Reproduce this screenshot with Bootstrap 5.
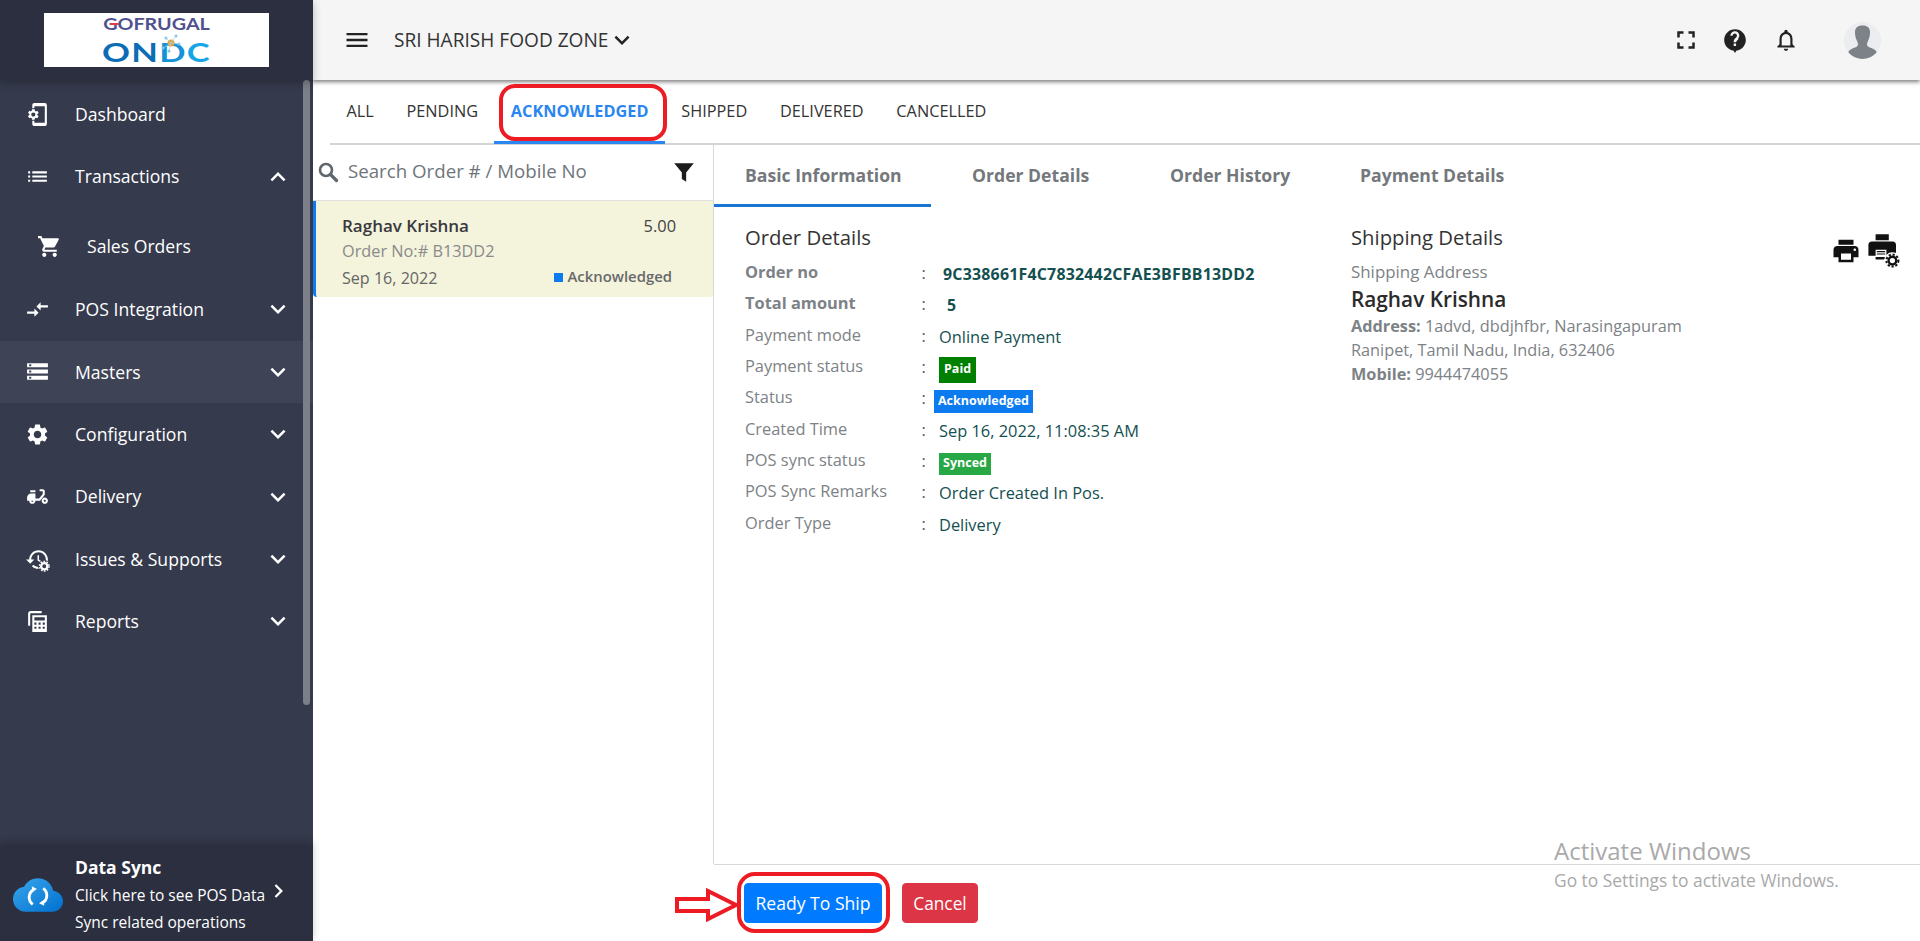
<!DOCTYPE html>
<html lang="en">
<head>
<meta charset="utf-8">
<title>Orders</title>
<link href="https://cdn.jsdelivr.net/npm/bootstrap@5.3.0/dist/css/bootstrap.min.css" rel="stylesheet">
<style>
html,body{height:100%;}
body{font-family:"Open Sans","Noto Sans",sans-serif;overflow:hidden;background:#fff;position:relative;}
.side{width:313px;background:#353a4c;color:#fff;position:relative;flex:none;}
.side-top{height:80px;background:#2b2f3f;box-shadow:0 3px 8px rgba(0,0,0,.25);padding:13px 0 0 44px;position:relative;z-index:2;}
.logo-box{width:225px;height:54px;background:#fff;text-align:center;position:relative;padding-top:1px;}
.logo-a{font-family:"Lato",sans-serif;font-size:17px;font-weight:700;color:#51508f;line-height:20.5px;height:20.5px;transform:scaleX(1.16);}
.logo-a b{font-weight:700;position:relative;}
.logo-a b::after{content:"";position:absolute;left:5px;top:10px;width:8px;height:2px;background:#d9434e;}
.logo-b{font-family:"Lato",sans-serif;font-size:27px;font-weight:700;color:#0b6db5;line-height:33px;height:33px;letter-spacing:1px;transform:scaleX(1.28);}
.logo-b i{font-style:normal;color:#1492d8;}
.logo-b u{text-decoration:none;color:#16a6e6;}
.logo-dots{position:absolute;left:116px;top:21px;}
.menu-wrap{padding-top:3px;flex:1;}
.mi{height:62.4px;padding:0 20.5px 0 25px;font-size:17.6px;}
.mi svg.ic{width:25px;height:25px;fill:#fff;flex:none;margin-right:25px;}
.mi svg.ch{width:30px;height:30px;fill:#fff;margin-left:auto;}
.mi.hot{background:#3e4355;}
.mi.sub{height:70.5px;padding-left:37px;padding-top:7px;}
.thumb{position:absolute;left:303px;top:80px;width:7px;height:625px;background:#7c7f87;border-radius:4px;z-index:1;}
.side-foot{height:96px;background:#2b2f3f;box-shadow:0 -3px 8px rgba(0,0,0,.2);padding:6px 0 0 13px;position:relative;z-index:2;}
.side-foot .cloud{width:50px;height:50px;margin-right:12px;flex:none;margin-top:-2px;}
.df-t{font-size:17.5px;font-weight:700;line-height:22px;margin-bottom:4px;}
.df-s{font-size:15.5px;line-height:27px;white-space:nowrap;}
.foot-ch{width:30px;height:30px;fill:#fff;margin-left:auto;margin-right:21px;margin-top:-10px;}
.topbar{height:80px;background:#f5f5f5;box-shadow:0 2px 4px rgba(0,0,0,.5);padding:0 39.500px 0 31px;position:relative;z-index:1;flex:none;}
.topbar .shop{font-size:19.100px;color:#333;margin-left:23px;}
.tb-ic{fill:#222;}
.os-tabs{height:65px;margin-left:17px;border-bottom:2px solid #d5d5d5;flex:none;}
.os-tab{font-size:16.3px;color:#333;padding:0 16.4px;height:64px;line-height:62px;white-space:nowrap;}
.os-tab.on{color:#2a86f0;font-weight:700;border-bottom:3px solid #2a86f0;}
.os-body{flex:1;min-height:0;}
.list-col{width:401px;border-right:1px solid #d8d8d8;flex:none;}
.searchrow{height:56px;border-bottom:1px solid #e0e0e0;padding:0 16px 2px 4px;}
.searchrow span{font-size:18.7px;color:#6f757b;margin-left:9px;}
.oitem{height:96px;background:#f4f3dc;border-left:3px solid #0d7bf0;border-radius:0 0 4px 4px;padding:14px 37px 0 26px;}
.o-name{font-size:17px;font-weight:600;color:#39393f;line-height:22px;}
.o-amt{font-size:16.4px;color:#444;line-height:21px;}
.o-no{font-size:16.3px;color:#8a8a8a;line-height:25px;margin-top:2px;}
.o-date{font-size:16.1px;color:#666;line-height:28px;}
.o-st{font-size:14.9px;font-weight:600;color:#68696b;line-height:24px;margin-right:4px;}
.o-st i{display:inline-block;width:9px;height:9px;background:#0d7bf0;margin-right:4px;}
.d-tabs{height:62px;flex:none;}
.d-tab{font-size:17.6px;font-weight:700;color:#74787c;padding:0 0 0 31px;height:62px;line-height:61px;white-space:nowrap;}
.d-tab.on{border-bottom:3px solid #1976d2;width:217px;}
.d-tab.t2{width:239px;padding-left:41px;}
.d-tab.t3{width:190px;padding-left:0;}
.d-tab.t4{padding-left:0;}
.d-body{padding:17px 0 0 31px;position:relative;flex:1;}
.hd{font-size:20.300px;color:#333;line-height:26px;margin-bottom:7px;}
.col-l{width:606px;flex:none;}
.dr{height:31.35px;font-size:16.4px;color:#7d8286;line-height:30px;white-space:nowrap;}
.dr .lb{width:176.5px;flex:none;}
.dr .cn{width:17.5px;flex:none;color:#555;padding-top:1px;}
.dr .vl{color:#14504f;padding-top:2px;font-size:16.4px;}
.dr.bd .lb{font-weight:700;}
.dr.bd .vl{font-weight:700;padding-left:4px;font-size:15.9px;letter-spacing:.22px;}
.tg{display:inline-block;color:#fff;font-weight:700;font-size:12.5px;line-height:1;padding:5px;vertical-align:top;margin-top:4px;}
.tg.p{background:#008000;padding:6px 5px 7px;}
.tg.a{background:#0d7bf0;margin-left:-5px;padding:5px 4px;margin-top:6px;}
.tg.s{background:#28a745;padding:4px 4px 5px;margin-top:6px;}
.sh1{font-size:16.9px;color:#7d8286;line-height:24px;padding-top:2.5px;}
.sh2{font-size:20.8px;font-weight:600;color:#2b2b2b;line-height:28px;padding-top:1px;}
.sh3{font-size:16.3px;color:#7d8286;line-height:24.4px;}
.sh2 + .sh3{padding-top:1px;}
.prn{position:absolute;left:1117px;top:29px;}
.actionbar{height:77px;flex:none;padding:19px 0 0 431px;}
.btn-ship{background:#007bff;border-color:#007bff;color:#fff;width:138px;height:40px;font-size:17.6px;padding:1px 0 0;border-radius:4px;}
.btn-can{background:#dc3545;border-color:#dc3545;color:#fff;width:76px;height:40px;font-size:17.3px;padding:1px 0 0;border-radius:4px;margin-left:20px;}
.bline{position:absolute;left:714px;right:0;top:864px;height:1px;background:#d8d8d8;}
.note{position:absolute;border:4px solid #ed1c24;border-radius:16px;background:transparent;z-index:5;}
.note.n1{left:499px;top:84px;width:168px;height:57px;}
.note.n2{left:737px;top:872px;width:153px;height:61px;border-radius:18px;}
.n-arrow{position:absolute;left:674px;top:888px;z-index:5;}
.wm{position:absolute;left:1554px;top:835px;color:#a9a9a9;z-index:6;pointer-events:none;white-space:nowrap;}
.wm div:first-child{font-size:24px;line-height:32px;}
.wm div:last-child{font-size:17.4px;line-height:26px;}
</style>
</head>
<body class="d-flex">
<aside class="side d-flex flex-column vh-100">
  <div class="side-top"><div class="logo-box"><div class="logo-a"><b>G</b>OFRUGAL</div><div class="logo-b">ON<i>D</i><u>C</u></div>
    <svg class="logo-dots" width="22" height="22" viewBox="0 0 22 22"><circle cx="11" cy="9" r="3.500" fill="#e2a33c"/><g fill="#7cc4ec"><circle cx="3" cy="14" r="1.500"/><circle cx="6" cy="4" r="1.500"/><circle cx="16" cy="2" r="1.500"/><circle cx="19" cy="10" r="1.500"/><circle cx="9" cy="17" r="1.500"/></g><path d="M3 14L11 9L6 4M11 9L16 2M11 9L19 10M11 9L9 17" stroke="#9fd3ef" stroke-width=".7" fill="none"/></svg>
  </div></div>
  <div class="thumb"></div>
  <nav class="menu-wrap">
    <div class="mi d-flex align-items-center"><svg class="ic" viewBox="0 0 24 24"><path d="M11.8 12.5v-1l1.1-.8c.1-.1.1-.2.1-.3l-1-1.7c-.1-.1-.2-.2-.3-.1l-1.3.4c-.3-.2-.6-.4-.9-.5l-.2-1.3c0-.1-.1-.2-.3-.2H7c-.1 0-.2.1-.3.2l-.2 1.3c-.3.1-.6.3-.9.5l-1.3-.5c-.1 0-.2 0-.3.1l-1 1.7c-.1.1 0 .2.1.3l1.1.8v1l-1.1.8c-.1.2-.1.3-.1.4l1 1.7c.1.1.2.2.3.1L5.6 15c.3.2.6.4.9.5l.2 1.3c.1.1.2.2.3.2h2c.1 0 .2-.1.3-.2l.2-1.3c.3-.1.6-.3.9-.5l1.3.5c.1 0 .2 0 .3-.1l1-1.7c.1-.1 0-.2-.1-.3l-1.1-.9zM8 14c-1.1 0-2-.9-2-2s.9-2 2-2 2 .9 2 2-.9 2-2 2zM19 1H9c-1.1 0-2 .9-2 2v3h2V4h10v16H9v-2H7v3c0 1.1.9 2 2 2h10c1.1 0 2-.9 2-2V3c0-1.1-.9-2-2-2z"/></svg>Dashboard</div>
    <div class="mi d-flex align-items-center"><svg class="ic" viewBox="0 0 24 24"><path d="M3 13h2v-2H3v2zm0 4h2v-2H3v2zm0-8h2V7H3v2zm4 4h14v-2H7v2zm0 4h14v-2H7v2zM7 7v2h14V7H7z"/></svg>Transactions<svg class="ch" viewBox="0 0 24 24"><path d="M12 8l-6 6 1.41 1.41L12 10.83l4.59 4.58L18 14z"/></svg></div>
    <div class="mi sub d-flex align-items-center"><svg class="ic" viewBox="0 0 24 24"><path d="M7 18c-1.1 0-1.99.9-1.99 2S5.9 22 7 22s2-.9 2-2-.9-2-2-2zM1 2v2h2l3.6 7.59-1.35 2.45c-.16.28-.25.61-.25.96 0 1.1.9 2 2 2h12v-2H7.42c-.14 0-.25-.11-.25-.25l.03-.12.9-1.63h7.45c.75 0 1.41-.41 1.75-1.03l3.58-6.49c.08-.14.12-.31.12-.48 0-.55-.45-1-1-1H5.21l-.94-2H1zm16 16c-1.1 0-1.99.9-1.99 2s.89 2 1.99 2 2-.9 2-2-.9-2-2-2z"/></svg>Sales Orders</div>
    <div class="mi d-flex align-items-center"><svg class="ic" viewBox="0 0 24 24"><path d="M9.01 14H2v2h7.01v3L13 15l-3.99-4v3zm5.98-1v-3H22V8h-7.01V5L11 9l3.99 4z"/></svg>POS Integration<svg class="ch" viewBox="0 0 24 24"><path d="M16.59 8.59L12 13.17 7.41 8.59 6 10l6 6 6-6z"/></svg></div>
    <div class="mi hot d-flex align-items-center"><svg class="ic" viewBox="0 0 24 24"><path d="M2 20h20v-4H2v4zm2-3h2v2H4v-2zM2 4v4h20V4H2zm4 3H4V5h2v2zm-4 7h20v-4H2v4zm2-3h2v2H4v-2z"/></svg>Masters<svg class="ch" viewBox="0 0 24 24"><path d="M16.59 8.59L12 13.17 7.41 8.59 6 10l6 6 6-6z"/></svg></div>
    <div class="mi d-flex align-items-center"><svg class="ic" viewBox="0 0 24 24"><path d="M19.14 12.94c.04-.3.06-.61.06-.94 0-.32-.02-.64-.07-.94l2.03-1.58c.18-.14.23-.41.12-.61l-1.92-3.32c-.12-.22-.37-.29-.59-.22l-2.39.96c-.5-.38-1.03-.7-1.62-.94l-.36-2.54c-.04-.24-.24-.41-.48-.41h-3.84c-.24 0-.43.17-.47.41l-.36 2.54c-.59.24-1.13.57-1.62.94l-2.39-.96c-.22-.08-.47 0-.59.22L2.74 8.87c-.12.21-.08.47.12.61l2.03 1.58c-.05.3-.09.63-.09.94s.02.64.07.94l-2.03 1.58c-.18.14-.23.41-.12.61l1.92 3.32c.12.22.37.29.59.22l2.39-.96c.5.38 1.03.7 1.62.94l.36 2.54c.05.24.24.41.48.41h3.84c.24 0 .44-.17.47-.41l.36-2.54c.59-.24 1.13-.56 1.62-.94l2.39.96c.22.08.47 0 .59-.22l1.92-3.32c.12-.22.07-.47-.12-.61l-2.01-1.58zM12 15.6c-1.98 0-3.6-1.62-3.6-3.6s1.62-3.6 3.6-3.6 3.6 1.62 3.6 3.6-1.62 3.6-3.6 3.6z"/></svg>Configuration<svg class="ch" viewBox="0 0 24 24"><path d="M16.59 8.59L12 13.17 7.41 8.59 6 10l6 6 6-6z"/></svg></div>
    <div class="mi d-flex align-items-center"><svg class="ic" viewBox="0 0 24 24"><path d="M19 7c0-1.1-.9-2-2-2h-3v2h3v2.65L13.52 14H10V9H6c-2.21 0-4 1.79-4 4v3h2c0 1.66 1.34 3 3 3s3-1.34 3-3h4.48L19 10.35V7zM7 17c-.55 0-1-.45-1-1h2c0 .55-.45 1-1 1zM5 6h5v2H5zM19 13c-1.66 0-3 1.34-3 3s1.34 3 3 3 3-1.34 3-3-1.34-3-3-3zm0 4c-.55 0-1-.45-1-1s.45-1 1-1 1 .45 1 1-.45 1-1 1z"/></svg>Delivery<svg class="ch" viewBox="0 0 24 24"><path d="M16.59 8.59L12 13.17 7.41 8.59 6 10l6 6 6-6z"/></svg></div>
    <div class="mi d-flex align-items-center"><svg class="ic" viewBox="0 0 24 24"><path d="M13 3c-4.97 0-9 4.03-9 9H1l3.89 3.89.07.14L9 12H6c0-3.87 3.13-7 7-7s7 3.13 7 7-3.13 7-7 7c-1.93 0-3.68-.79-4.94-2.06l-1.42 1.42C8.27 19.99 10.51 21 13 21c4.97 0 9-4.03 9-9s-4.03-9-9-9zm-1 5v5l4.28 2.54.72-1.21-3.5-2.08V8H12z"/><circle cx="18.5" cy="18.5" r="6" fill="#353a4c"/><circle cx="18.5" cy="18.5" r="3" fill="none" stroke="#fff" stroke-width="2.2"/><circle cx="18.5" cy="18.5" r="4.6" fill="none" stroke="#fff" stroke-width="1.4" stroke-dasharray="1.6 1.3"/></svg>Issues &amp; Supports<svg class="ch" viewBox="0 0 24 24"><path d="M16.59 8.59L12 13.17 7.41 8.59 6 10l6 6 6-6z"/></svg></div>
    <div class="mi d-flex align-items-center"><svg class="ic" viewBox="0 0 24 24"><path d="M3 4.5C3 3.1 4.1 2 5.5 2H16v2H5.500C5.200 4 5 4.200 5 4.500V16H3z"/><path fill-rule="evenodd" d="M7 6h14v16H7zM9 8v3h10V8zM9 13v2h2v-2zm4 0v2h2v-2zm4 0v2h2v-2zM9 17v2h2v-2zm4 0v2h2v-2zm4 0v2h2v-2z"/></svg>Reports<svg class="ch" viewBox="0 0 24 24"><path d="M16.59 8.59L12 13.17 7.41 8.59 6 10l6 6 6-6z"/></svg></div>
  </nav>
  <div class="side-foot d-flex align-items-center">
    <svg class="cloud" viewBox="0 0 24 24"><defs><linearGradient id="cg" x1="0" y1="0" x2="1" y2="1"><stop offset="0" stop-color="#3aa6ec"/><stop offset="1" stop-color="#0070cf"/></linearGradient></defs><path fill="url(#cg)" d="M19.35 10.04C18.67 6.59 15.64 4 12 4 9.11 4 6.6 5.64 5.35 8.04 2.34 8.36 0 10.91 0 14c0 3.31 2.69 6 6 6h13c2.76 0 5-2.24 5-5 0-2.64-2.05-4.78-4.65-4.96z"/><path fill="none" stroke="#fff" stroke-width="1.4" d="M9.500 16.500a4.200 4.200 0 0 1 .3-7M14.500 8.800a4.200 4.200 0 0 1-.3 7"/><path fill="#fff" d="M9 7.800l2.500 1.300-2.200 1.500zM15 17.200l-2.500-1.300 2.200-1.500z"/></svg>
    <div><div class="df-t">Data Sync</div><div class="df-s">Click here to see POS Data</div><div class="df-s">Sync related operations</div></div>
    <svg class="foot-ch" viewBox="0 0 24 24"><path d="M10 6L8.590 7.410 13.170 12l-4.580 4.590L10 18l6-6z"/></svg>
  </div>
</aside>
<main class="flex-grow-1 d-flex flex-column vh-100" style="min-width:0">
  <header class="topbar d-flex align-items-center">
    <svg class="tb-ic" width="28" height="28" viewBox="0 0 24 24" style="margin-left:-1px"><path d="M3 18h18v-2H3v2zm0-5h18v-2H3v2zm0-7v2h18V6H3z"/></svg>
    <span class="shop">SRI HARISH FOOD ZONE</span>
    <svg class="tb-ic" width="30" height="30" viewBox="0 0 24 24" style="margin-left:-1px"><path d="M16.59 8.59L12 13.17 7.41 8.59 6 10l6 6 6-6z"/></svg>
    <div class="ms-auto d-flex align-items-center">
      <svg class="tb-ic" width="30" height="30" viewBox="0 0 24 24"><path d="M7 14H5v5h5v-2H7v-3zm-2-4h2V7h3V5H5v5zm12 7h-3v2h5v-5h-2v3zM14 5v2h3v3h2V5h-5z"/></svg>
      <svg class="tb-ic" width="26" height="26" viewBox="0 0 24 24" style="margin-left:21px"><path fill-rule="evenodd" d="M12 2C6.480 2 2 6.480 2 12c0 5 3.600 9 8.500 9.800l1.500 2.200 1.200-2.100C18.200 21.300 22 17 22 12c0-5.520-4.480-10-10-10zm1 15.500h-2.200v-2.200H13zm2.070-6.250l-.9.920C13.450 12.900 13 13.500 13 14h-2.200v-.500c0-1.100.45-2.100 1.170-2.830l1.240-1.260c.37-.36.59-.86.59-1.410 0-1.100-.9-2-2-2s-2 .9-2 2H7.800c0-2.210 1.990-4 4.200-4s4 1.790 4 4c0 .88-.36 1.680-.93 2.250z"/></svg>
      <svg class="tb-ic" width="26" height="26" viewBox="0 0 24 24" style="margin-left:25px"><path d="M12 22c1.100 0 2-.9 2-2h-4c0 1.100.9 2 2 2zm6-6v-5c0-3.070-1.630-5.640-4.500-6.320V4c0-.83-.67-1.500-1.500-1.500s-1.500.67-1.500 1.500v.68C7.640 5.360 6 7.920 6 11v5l-2 2v1h16v-1l-2-2zm-2 1H8v-6c0-2.480 1.510-4.500 4-4.500s4 2.020 4 4.500v6z"/></svg>
      <svg width="37" height="37" viewBox="0 0 37 37" style="margin-left:45px"><defs><clipPath id="av"><circle cx="18.500" cy="18.500" r="18.500"/></clipPath></defs><circle cx="18.500" cy="18.500" r="18.500" fill="#ebedf0"/><g clip-path="url(#av)" fill="#7d8289"><path d="M11 10c0-5 3.500-6.500 7.500-6.500S26 5 26 10c0 3.500-.7 6-1.600 8-.7 1.600-1.400 3-1.400 4.500 0 2 3 3 6 4.300 2.500 1.100 4 2.500 4 5.200v6H4v-6c0-2.700 1.500-4.100 4-5.200 3-1.300 6-2.300 6-4.300 0-1.500-.7-2.900-1.400-4.500C11.700 16 11 13.500 11 10z"/></g></svg>
    </div>
  </header>
  <div class="os-tabs d-flex">
    <div class="os-tab">ALL</div><div class="os-tab">PENDING</div><div class="os-tab on">ACKNOWLEDGED</div><div class="os-tab">SHIPPED</div><div class="os-tab">DELIVERED</div><div class="os-tab">CANCELLED</div>
  </div>
  <div class="os-body d-flex">
    <div class="list-col">
      <div class="searchrow d-flex align-items-center">
        <svg width="22" height="22" viewBox="0 0 22 22"><circle cx="9" cy="9" r="6" fill="none" stroke="#5f666d" stroke-width="2.600"/><path d="M13.500 13.500l6 6" stroke="#5f666d" stroke-width="3.200" stroke-linecap="round"/></svg>
        <span>Search Order # / Mobile No</span>
        <svg class="ms-auto" width="26" height="26" viewBox="0 0 24 24" fill="#1c1c1c"><path d="M3 4h18l-7 8.500V21l-4-2.500v-6z"/></svg>
      </div>
      <div class="oitem">
        <div class="d-flex justify-content-between"><span class="o-name">Raghav Krishna</span><span class="o-amt">5.00</span></div>
        <div class="o-no">Order No:# B13DD2</div>
        <div class="d-flex justify-content-between"><span class="o-date">Sep 16, 2022</span><span class="o-st"><i></i>Acknowledged</span></div>
      </div>
    </div>
    <div class="flex-grow-1 d-flex flex-column">
      <div class="d-tabs d-flex">
        <div class="d-tab on">Basic Information</div><div class="d-tab t2">Order Details</div><div class="d-tab t3">Order History</div><div class="d-tab t4">Payment Details</div>
      </div>
      <div class="d-body d-flex">
        <div class="col-l">
          <div class="hd">Order Details</div>
          <div class="dr bd d-flex"><div class="lb">Order no</div><div class="cn">:</div><div class="vl">9C338661F4C7832442CFAE3BFBB13DD2</div></div>
          <div class="dr bd d-flex"><div class="lb">Total amount</div><div class="cn">:</div><div class="vl" style="padding-left:8px">5</div></div>
          <div class="dr d-flex"><div class="lb">Payment mode</div><div class="cn">:</div><div class="vl">Online Payment</div></div>
          <div class="dr d-flex"><div class="lb">Payment status</div><div class="cn">:</div><div class="vl"><span class="tg p">Paid</span></div></div>
          <div class="dr d-flex"><div class="lb">Status</div><div class="cn">:</div><div class="vl"><span class="tg a">Acknowledged</span></div></div>
          <div class="dr d-flex"><div class="lb">Created Time</div><div class="cn">:</div><div class="vl">Sep 16, 2022, 11:08:35 AM</div></div>
          <div class="dr d-flex"><div class="lb">POS sync status</div><div class="cn">:</div><div class="vl"><span class="tg s">Synced</span></div></div>
          <div class="dr d-flex"><div class="lb">POS Sync Remarks</div><div class="cn">:</div><div class="vl">Order Created In Pos.</div></div>
          <div class="dr d-flex"><div class="lb">Order Type</div><div class="cn">:</div><div class="vl">Delivery</div></div>
        </div>
        <div>
          <div class="hd">Shipping Details</div>
          <div class="sh1">Shipping Address</div>
          <div class="sh2">Raghav Krishna</div>
          <div class="sh3"><b>Address:</b> 1advd, dbdjhfbr, Narasingapuram</div>
          <div class="sh3">Ranipet, Tamil Nadu, India, 632406</div>
          <div class="sh3"><b>Mobile:</b> 9944474055</div>
        </div>
        <div class="prn d-flex">
          <svg width="30" height="30" viewBox="0 0 24 24" fill="#111"><path d="M19 8H5c-1.660 0-3 1.340-3 3v6h4v4h12v-4h4v-6c0-1.660-1.340-3-3-3zm-3 11H8v-5h8v5zm3-7c-.55 0-1-.45-1-1s.45-1 1-1 1 .45 1 1-.45 1-1 1zm-1-9H6v4h12V3z"/></svg>
          <svg width="34" height="36" viewBox="0 0 28 30" fill="#111" style="margin:-3px 0 0 6px"><path d="M7 1h11v5H7zM4 7h17a3 3 0 0 1 3 3v9h-6v3H7v-3H1v-9a3 3 0 0 1 3-3zm3 7v6h9v-6z"/><path d="M8 15h7v1H8zm0 2h7v1H8z"/><circle cx="21" cy="23" r="7" fill="#fff"/><circle cx="21" cy="23" r="3.200" fill="none" stroke="#111" stroke-width="2"/><circle cx="21" cy="23" r="5" fill="none" stroke="#111" stroke-width="1.700" stroke-dasharray="1.800 1.500"/></svg>
        </div>
      </div>
    </div>
  </div>
  <div class="actionbar d-flex align-items-start">
    <button type="button" class="btn btn-ship">Ready To Ship</button>
    <button type="button" class="btn btn-can">Cancel</button>
  </div>
</main>
<div class="bline"></div>
<div class="note n1"></div>
<div class="note n2"></div>
<svg class="n-arrow" width="66" height="34" viewBox="0 0 66 34"><path d="M3 11h31V3l28 14-28 14v-8H3z" fill="#fff" stroke="#ed1c24" stroke-width="4"/></svg>
<div class="wm"><div>Activate Windows</div><div>Go to Settings to activate Windows.</div></div>
</body>
</html>
